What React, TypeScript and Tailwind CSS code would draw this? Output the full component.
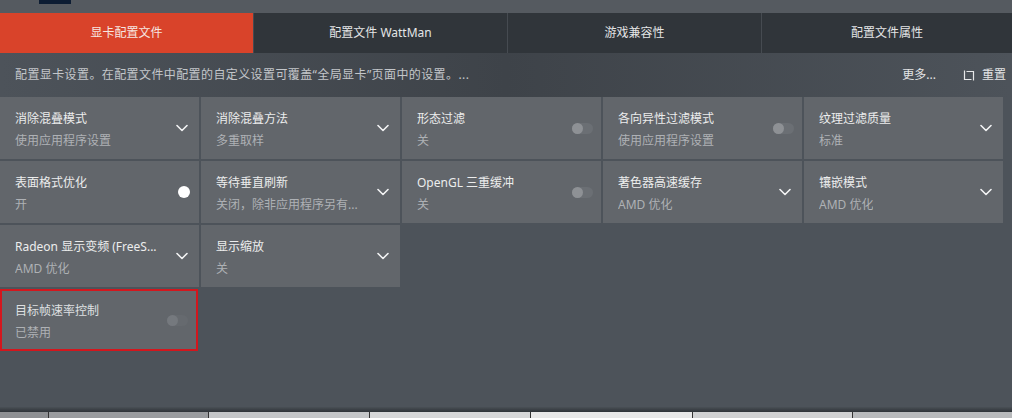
import { ReactNode } from 'react'

type Control = 'chevron' | 'off' | 'on' | 'disabled'

interface Setting {
  title: string
  value: string
  control: Control
  flagged?: boolean
}

const tabs = ['显卡配置文件', '配置文件 WattMan', '游戏兼容性', '配置文件属性']

const settings: Setting[] = [
  { title: '消除混叠模式', value: '使用应用程序设置', control: 'chevron' },
  { title: '消除混叠方法', value: '多重取样', control: 'chevron' },
  { title: '形态过滤', value: '关', control: 'off' },
  { title: '各向异性过滤模式', value: '使用应用程序设置', control: 'off' },
  { title: '纹理过滤质量', value: '标准', control: 'chevron' },
  { title: '表面格式优化', value: '开', control: 'on' },
  { title: '等待垂直刷新', value: '关闭，除非应用程序另有...', control: 'chevron' },
  { title: 'OpenGL 三重缓冲', value: '关', control: 'off' },
  { title: '著色器高速缓存', value: 'AMD 优化', control: 'chevron' },
  { title: '镶嵌模式', value: 'AMD 优化', control: 'chevron' },
  { title: 'Radeon 显示变频 (FreeS...', value: 'AMD 优化', control: 'chevron' },
  { title: '显示缩放', value: '关', control: 'chevron' },
  { title: '目标帧速率控制', value: '已禁用', control: 'disabled', flagged: true },
]

function Chevron() {
  return (
    <svg width="12" height="8" viewBox="0 0 12 8" fill="none" className="mr-[11px]">
      <path d="M1 1.5l5 5 5-5" stroke="#f2f3f4" strokeWidth="1.6" strokeLinecap="round" strokeLinejoin="round" />
    </svg>
  )
}

function Toggle({ state }: { state: Control }) {
  if (state === 'on') {
    return <div className="mr-[9px] size-[12px] rounded-full bg-white" />
  }
  const dim = state === 'disabled'
  return (
    <div
      className={`mr-[8px] flex h-[11px] w-[21px] items-center rounded-full ${
        dim ? 'bg-[#666a6f]' : 'bg-[#6b6f74]'
      }`}
    >
      <div className={`size-[11px] rounded-full ${dim ? 'bg-[#75797e]' : 'bg-[#8e9195]'}`} />
    </div>
  )
}

function Tile({ title, value, control, flagged }: Setting) {
  let right: ReactNode
  if (control === 'chevron') right = <Chevron />
  else right = <Toggle state={control} />

  return (
    <div
      className={`flex h-[62px] items-center justify-between bg-[#62666b] ${
        flagged ? 'border-2 border-[#d3161d] pl-[13px]' : 'pl-[15px]'
      }`}
    >
      <div className="flex min-w-0 flex-col gap-[4px] pt-[3px]">
        <span className={`truncate text-[12px] leading-[18px] ${flagged ? 'text-[#dfe0e2]' : 'text-[#eceded]'}`}>
          {title}
        </span>
        <span className="truncate text-[12px] leading-[18px] text-[#aeb1b5]">{value}</span>
      </div>
      {right}
    </div>
  )
}

// square loop with a tick at two corners, like the Radeon reset glyph
function ResetIcon() {
  return (
    <svg width="12" height="11" viewBox="0 0 12 11" fill="none" stroke="#e6e7e8" strokeWidth="1.2">
      <path d="M3.5 1.5h7v6.5" />
      <path d="M8.5 9.5h-7V3" />
      <path d="M1.5 0.5v2.5" />
      <path d="M10.5 8v2.5" />
    </svg>
  )
}

export default function App() {
  return (
    <div
      className="flex h-[418px] w-[1012px] flex-col overflow-hidden bg-[#4d535a]"
      style={{ fontFamily: '"Noto Sans", "Noto Sans CJK SC", sans-serif' }}
    >
      {/* window strip above the tabs */}
      <div className="h-[13px] shrink-0 bg-[#555a60]">
        <div className="ml-[39px] h-[4px] w-[32px] bg-[#0d1d33]" />
      </div>

      {/* tab bar */}
      <div className="grid h-[40px] shrink-0 grid-cols-[253px_254px_254px_251px] bg-[#2e3237]">
        {tabs.map((tab, i) => (
          <div
            key={tab}
            className={`flex items-center justify-center text-[12px] ${
              i === 0
                ? 'bg-[#d9432a] text-[#f6e6e1]'
                : 'border-l border-[#464b51] bg-[#30353a] text-[#e4e5e6]'
            }`}
          >
            {tab}
          </div>
        ))}
      </div>

      {/* description row */}
      <div className="flex h-[44px] shrink-0 items-center justify-between bg-gradient-to-r from-[#4d535a] via-[#3e4349] to-[#4d535a] pl-[15px] pr-[6px] text-[12px]">
        <span className="tracking-[0.4px] text-[#c3c6ca]">
          配置显卡设置。在配置文件中配置的自定义设置可覆盖“全局显卡”页面中的设置。...
        </span>
        <div className="flex items-center text-[#e3e4e5]">
          <span>更多...</span>
          <span className="ml-[27px] flex items-center gap-[7px]">
            <ResetIcon />
            重置
          </span>
        </div>
      </div>

      {/* settings grid */}
      <div className="grid w-[1003px] grid-cols-[repeat(5,199px)] gap-[2px]">
        {settings.map((s) =>
          s.flagged ? (
            <div key={s.title} className="col-start-1 w-[198px]">
              <Tile {...s} />
            </div>
          ) : (
            <Tile key={s.title} {...s} />
          ),
        )}
      </div>

      <div className="flex-1" />

      {/* taskbar edge at the bottom */}
      <div className="h-[5px] shrink-0 bg-gradient-to-b from-[#4a5056] to-[#2e3338]" />
      <div className="flex h-[6px] shrink-0 bg-[#bfc1c4]">
        <div className="w-[48px] bg-[#8e9093]" />
        <div className="w-[160px] border-l border-[#333] bg-[#9a9c9f]" />
        <div className="w-[161px] border-l border-[#333] bg-[#c4c6c8]" />
        <div className="w-[161px] border-l border-[#333] bg-[#d6d7d8]" />
        <div className="w-[162px] border-l border-[#333] bg-[#e8e8e8]" />
        <div className="w-[160px] border-l border-[#333] bg-[#d0d1d2]" />
        <div className="flex-1 border-l border-[#333] bg-[#b8babc]" />
      </div>
    </div>
  )
}
